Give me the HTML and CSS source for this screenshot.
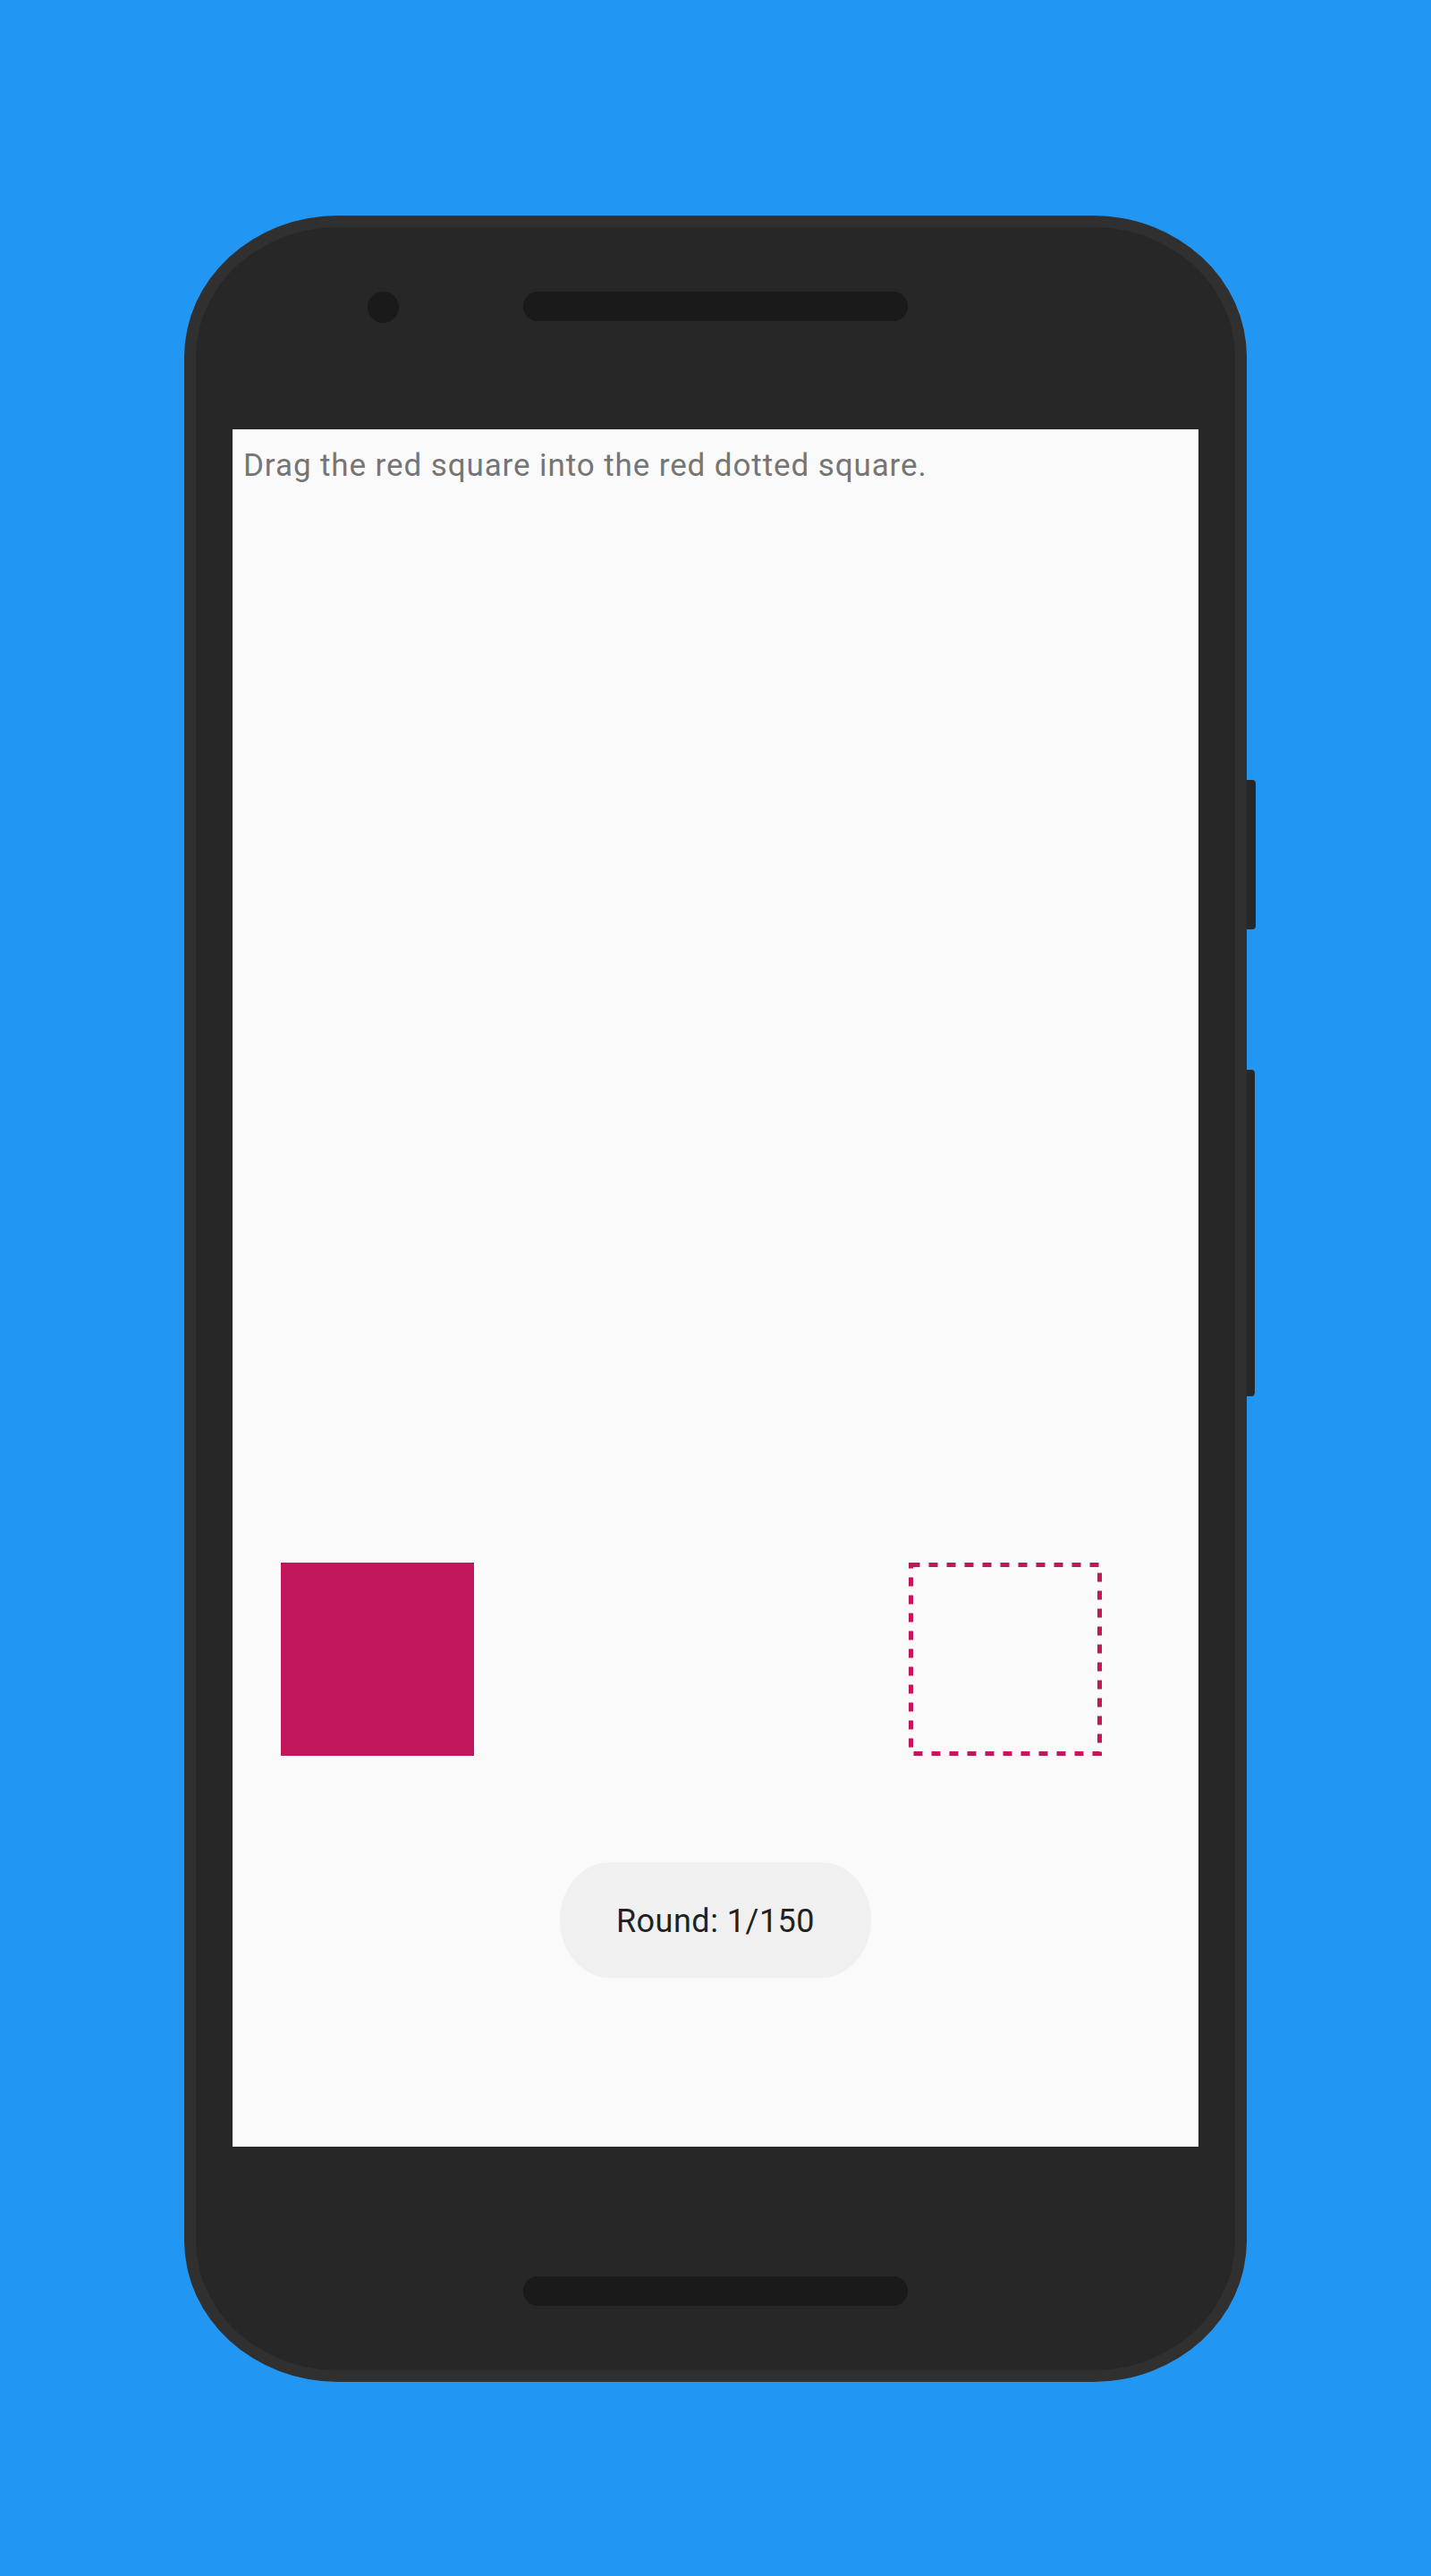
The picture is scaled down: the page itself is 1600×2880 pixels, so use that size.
FILE: index.html
```html
<!DOCTYPE html>
<html lang="en">
<head>
<meta charset="utf-8">
<title>Drag game</title>
<link rel="stylesheet" href="styles.css">
</head>
<body>
<div class="stage">
  <div class="device">
    <div class="phone">
      <div class="top-bezel">
        <div class="cam-col"><div class="camera"></div></div>
        <div class="speaker"></div>
        <div></div>
      </div>
      <div class="screen">
        <p class="hint">Drag the red square into the red dotted square.</p>
        <div class="play-row">
          <div class="block"></div>
          <svg class="target" width="216" height="216" viewBox="0 0 216 216">
            <rect x="2.5" y="2.5" width="211" height="211" fill="none" stroke="#C2185B" stroke-width="5" stroke-dasharray="10 10"/>
          </svg>
        </div>
        <div class="round">Round: 1/150</div>
      </div>
      <div class="bottom-bezel">
        <div class="speaker"></div>
      </div>
    </div>
    <div class="side-buttons">
      <div class="btn btn-power"></div>
      <div class="btn btn-volume"></div>
    </div>
  </div>
</div>
</body>
</html>
```
FILE: styles.css
```css
html, body {
  margin: 0;
  padding: 0;
}
body {
  background: #2196F3;
  width: 1600px;
  height: 2880px;
  font-family: Roboto, "Liberation Sans", sans-serif;
}
.stage {
  padding-top: 241px;
  padding-left: 206px;
}
.device {
  display: flex;
  align-items: flex-start;
}
.phone {
  box-sizing: border-box;
  width: 1188px;
  height: 2422px;
  background: #272727;
  border: 13px solid #303030;
  border-radius: 172px / 158px;
  display: flex;
  flex-direction: column;
  align-items: center;
}
.top-bezel {
  width: 100%;
  height: 226px;
  box-sizing: border-box;
  padding-top: 72px;
  display: grid;
  grid-template-columns: 1fr auto 1fr;
  align-items: start;
}
.cam-col {
  display: flex;
}
.camera {
  width: 35px;
  height: 35px;
  border-radius: 50%;
  background: #1a1a1a;
  margin-left: 192px;
}
.speaker {
  width: 430px;
  height: 33px;
  border-radius: 17px;
  background: #1a1a1a;
}
.screen {
  width: 1080px;
  height: 1920px;
  background: #FAFAFA;
  display: flex;
  flex-direction: column;
  flex: none;
}
.hint {
  margin: 20px 0 0 12px;
  font-size: 35px;
  line-height: 41px;
  letter-spacing: 0.9px;
  color: #757575;
  white-space: nowrap;
}
.play-row {
  margin-top: 1206px;
  padding: 0 108px 0 54px;
  display: flex;
  justify-content: space-between;
}
.block {
  width: 216px;
  height: 216px;
  background: #C2185B;
}
.target {
  display: block;
}
.round {
  align-self: center;
  margin-top: 119px;
  width: 348px;
  height: 129px;
  border-radius: 56px / 64px;
  background: #F0F0F0;
  color: #212121;
  font-size: 36px;
  letter-spacing: 0.5px;
  display: flex;
  align-items: center;
  justify-content: center;
  padding-top: 2px;
  box-sizing: border-box;
}
.bottom-bezel {
  width: 100%;
  padding-top: 145px;
  display: flex;
  justify-content: center;
}
.side-buttons {
  display: flex;
  flex-direction: column;
}
.btn {
  width: 10px;
  background: #272727;
  border-radius: 0 4px 4px 0;
}
.btn-power {
  margin-top: 631px;
  height: 167px;
}
.btn-volume {
  margin-top: 157px;
  height: 365px;
  width: 9px;
}
```
